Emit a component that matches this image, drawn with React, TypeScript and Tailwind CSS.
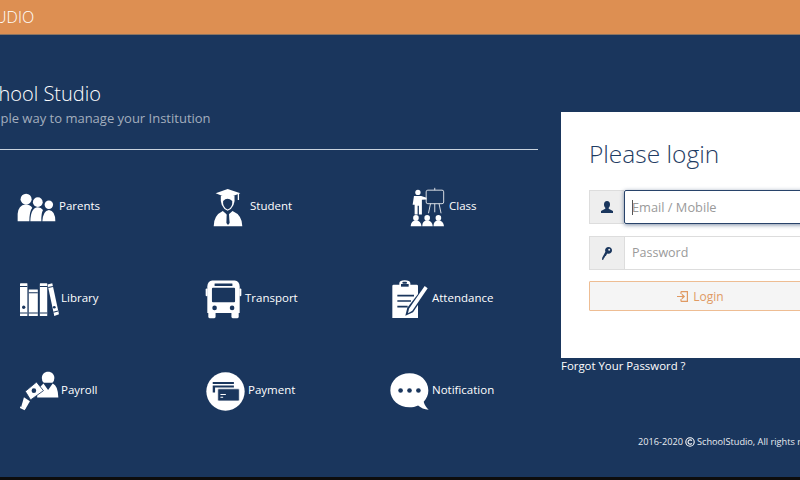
const DARK = "#1a365d";

function Parents() {
  return (
    <svg width="39" height="30" viewBox="50 65 120 92" fill="#fff">
      <circle cx="78" cy="87" r="17" />
      <circle cx="114" cy="96" r="15" />
      <circle cx="148" cy="104" r="13" />
      <path d="M52 155V132Q54 105 76 103Q90 103 97 113Q88 124 88 155Z" />
      <path d="M91 155Q92 114 114 112Q124 113 130 120Q124 130 125 155Z" />
      <path d="M128 155Q130 122 148 120Q168 122 168 155Z" />
    </svg>
  );
}

function Student() {
  return (
    <svg width="30" height="39" viewBox="638 52 92 120" fill="#fff">
      <path d="M662 76Q658 112 683 122Q708 112 704 76Z" />
      <path d="M669 92Q682 78 697 92Q699 112 683 118Q667 112 669 92Z" fill={DARK} />
      <path d="M683 55L722 68L683 83L646 68Z" />
      <rect x="714" y="70" width="4" height="19" />
      <path d="M640 170Q640 136 668 123L683 136L698 123Q728 136 728 170Z" />
      <path d="M680 132H687L689 160L684 166L679 160Z" fill={DARK} />
    </svg>
  );
}

function ClassIcon() {
  return (
    <svg width="35" height="40" viewBox="418 52 106 120" fill="#fff">
      <circle cx="442" cy="68" r="8" />
      <path d="M430 79H452L468 84V89L454 90V135H445V108H441V135H432V105H426Z" />
      <rect x="467" y="61" width="53" height="41" rx="5" fill="none" stroke="#fff" strokeWidth="2.500" />
      <path d="M493 54V61M480 102L474 131M493 102V128M506 102L512 131" stroke="#fff" strokeWidth="2.500" fill="none" />
      <circle cx="436" cy="145" r="8.500" />
      <circle cx="470" cy="145" r="8.500" />
      <circle cx="504" cy="145" r="8.500" />
      <path d="M420 170Q421 153 436 152Q451 153 453 170Z" />
      <path d="M455 170Q455 153 470 152Q485 153 487 170Z" />
      <path d="M489 170Q489 153 504 152Q519 153 521 170Z" />
    </svg>
  );
}

function Library() {
  return (
    <svg width="41" height="35" viewBox="55 336 122 104">
      <g fill="#fff">
        <rect x="58" y="340" width="22" height="97" rx="1" />
        <rect x="84" y="358" width="27" height="79" rx="1" />
        <rect x="117" y="340" width="22" height="97" rx="1" />
        <path d="M140 343L154 340L174 432L160 437Z" />
      </g>
      <g stroke={DARK} strokeWidth="3" fill="none">
        <path d="M58 349H80M58 428H80M84 368H111M84 428H111M117 349H139M117 428H139M142 352L156 349M157 426L171 422" />
      </g>
      <circle cx="69" cy="411" r="5" fill={DARK} />
      <circle cx="160" cy="411" r="4" fill={DARK} />
    </svg>
  );
}

function Bus() {
  return (
    <svg width="37" height="40" viewBox="612 328 112 120">
      <g fill="#fff">
        <path d="M634 332H702Q716 334 717 350V430H619V350Q620 334 634 332Z" />
        <rect x="614" y="356" width="6" height="24" rx="3" />
        <rect x="716" y="356" width="6" height="24" rx="3" />
        <rect x="622" y="425" width="22" height="21" rx="4" />
        <rect x="692" y="425" width="22" height="21" rx="4" />
      </g>
      <rect x="633" y="354" width="70" height="44" rx="3" fill={DARK} />
      <rect x="641" y="341" width="54" height="8" rx="1" fill={DARK} />
      <circle cx="641" cy="415" r="7" fill={DARK} />
      <circle cx="694" cy="415" r="7" fill={DARK} />
    </svg>
  );
}

function Attendance() {
  return (
    <svg width="38" height="40" viewBox="362 328 114 120">
      <path d="M366 349Q366 345 370 345H387V340Q388 332 403 332Q419 332 420 340V345H439Q443 345 443 349V445H366Z" fill="#fff" />
      <rect x="392" y="343" width="23" height="8" fill={DARK} />
      <rect x="396" y="336" width="14" height="6" rx="3" fill={DARK} />
      <path d="M381 378H431M381 394H422M381 411H412" stroke={DARK} strokeWidth="5" fill="none" />
      <path d="M466 344L478 354L428 428L405 438L411 414Z" fill={DARK} />
      <path d="M463 349L472 356L426 423L413 431L416 417Z" fill="#fff" />
    </svg>
  );
}

function Payroll() {
  return (
    <svg width="39" height="40" viewBox="60 35 118 120" fill="#fff">
      <path d="M145 37C156 37 164 45 164 56Q164 66 158 70H132Q126 66 126 56C126 45 134 37 145 37Z" />
      <path d="M131 72L145 92L159 72Q175 78 176 115H112V92Z" />
      <path d="M76 96L110 68L131 94L92 122Z" stroke={DARK} strokeWidth="2.500" />
      <circle cx="102" cy="94" r="7" fill={DARK} />
      <path d="M72 114L90 126L76 150L64 142Z" />
      <rect x="60" y="144" width="16" height="6" transform="rotate(25 68 147)" />
    </svg>
  );
}

function Payment() {
  return (
    <svg width="39" height="39" viewBox="617 36 116 116">
      <circle cx="675" cy="94" r="57" fill="#fff" />
      <path d="M637 66H700V72H637ZM637 76H700V82H637ZM637 82H644V97H637Z" fill={DARK} />
      <rect x="652" y="86" width="64" height="36" rx="3" fill={DARK} stroke="#fff" strokeWidth="2" />
      <path d="M660 103H676M660 111H668" stroke="#fff" strokeWidth="3" />
    </svg>
  );
}

function Notification() {
  return (
    <svg width="39" height="37" viewBox="360 38 118 112">
      <path d="M419 39C451 39 476 61 476 91C476 104 471 116 462 125C464 134 470 143 477 149C464 148 453 143 445 136C437 140 428 142 419 142C387 142 361 119 361 91C361 61 387 39 419 39Z" fill="#fff" />
      <circle cx="392" cy="91" r="7" fill={DARK} />
      <circle cx="419" cy="91" r="7" fill={DARK} />
      <circle cx="446" cy="91" r="7" fill={DARK} />
    </svg>
  );
}

const items = [
  { label: "Parents", Icon: Parents, cell: "pl-0 gap-[3px]" },
  { label: "Student", Icon: Student, cell: "pl-[10px] gap-[7px]" },
  { label: "Class", Icon: ClassIcon, cell: "pl-[21px] gap-[4px]" },
  { label: "Library", Icon: Library, cell: "pl-[2px] gap-[1px]" },
  { label: "Transport", Icon: Bus, cell: "pl-[2px] gap-[3px]" },
  { label: "Attendance", Icon: Attendance, cell: "pl-[2px] gap-[3px]" },
  { label: "Payroll", Icon: Payroll, cell: "pl-[3px] gap-[2px]" },
  { label: "Payment", Icon: Payment, cell: "pl-[3px] gap-[3px]" },
  { label: "Notification", Icon: Notification, cell: "pl-[1px] gap-[3px]" },
];

export default function App() {
  return (
    <div className="w-[800px] h-[480px] overflow-hidden flex flex-col bg-[#1a365d] font-['Open_Sans',sans-serif] text-white">
      <header className="h-[35px] shrink-0 bg-[#dd8f52] border-b border-[#8a7462] flex items-center">
        <span className="-ml-[89px] text-[16px] font-light leading-none whitespace-nowrap">SCHOOL STUDIO</span>
      </header>

      <main className="flex-1 flex min-h-0">
        <section className="w-[538px] shrink-0 pt-[47px]">
          <div className="-ml-[22px] whitespace-nowrap">
            <h1 className="text-[20px] font-light leading-[24px]">School Studio</h1>
            <p className="mt-[1px] text-[13px] leading-[22px] text-[#a3aebd]">Simple way to manage your Institution</p>
          </div>
          <hr className="mt-[20px] border-0 h-px bg-[#c9d3de]" />
          <div className="mt-[11px] pl-[17px] grid grid-cols-[186px_186px_186px] auto-rows-[92px]">
            {items.map(({ label, Icon, cell }) => (
              <div key={label} className={`flex items-center ${cell}`}>
                <Icon />
                <span className="mb-[2px] text-[11.500px] leading-none">{label}</span>
              </div>
            ))}
          </div>
        </section>

        <section className="ml-[23px] shrink-0 w-[279px] pt-[77px]">
          <div className="h-[246px] bg-white px-[28px] pt-[24px]">
            <h2 className="text-[24.500px] font-light leading-[36px] whitespace-nowrap text-[#1f3c63]">Please login</h2>
            <div className="mt-[18px] flex h-[34px]">
              <div className="w-[35px] shrink-0 flex items-center justify-center bg-[#eeeeee] border border-r-0 border-[#dddddd]">
                <svg width="12" height="12" viewBox="0 0 12 12" fill={DARK}>
                  <path d="M6 0C8 0 9 1.500 9 3.500C9 5 8.400 6 7.700 6.800V7.800L12 10V12H0V10L4.300 7.800V6.800C3.600 6 3 5 3 3.500C3 1.500 4 0 6 0Z" />
                </svg>
              </div>
              <div className="flex-1 flex items-center pl-[7px] pt-[1px] border border-[#28436a] rounded-[2px] shadow-[0_1px_4px_rgba(40,67,106,0.6)] text-[12.800px] text-[#9a9a9a]">
                <span className="w-px h-[15px] bg-[#555] mr-[-1px]" />
                <span>Email / Mobile</span>
              </div>
            </div>
            <div className="mt-[12px] flex h-[34px]">
              <div className="w-[35px] shrink-0 flex items-center justify-center bg-[#eeeeee] border border-r-0 border-[#dddddd]">
                <svg width="10" height="13" viewBox="0 0 10 13" fill={DARK}>
                  <path d="M6.500 0C8.500 0 10 1.500 10 3.300C10 5.300 8.500 6.800 6.500 6.800C6 6.800 5.600 6.700 5.200 6.500L3.800 9L3 9.300L2.800 10.500L1.900 10.800L1.700 12.200L0.400 13L0 12.800L0.200 10.800L3.400 4.700C3.200 4.300 3.100 3.800 3.100 3.300C3.100 1.500 4.500 0 6.500 0Z" />
                  <circle cx="7.200" cy="2.800" r="1" fill="#eeeeee" />
                </svg>
              </div>
              <div className="flex-1 flex items-center pl-[7px] border border-[#dddddd] text-[12.500px] text-[#9a9a9a]">Password</div>
            </div>
            <button className="mt-[11px] w-full h-[30px] pt-[1px] flex items-center justify-center gap-[5px] bg-[#f5f5f5] border border-[#eebd93] rounded-[1px] text-[12px] text-[#e09a63]">
              <svg width="11" height="11" viewBox="0 0 11 11" fill="none" stroke="#e09a63" strokeWidth="1.200">
                <path d="M4 .6H10.400V10.400H4M4 .6V3M4 10.400V8M0 5.500H7M4.800 3.200L7.200 5.500L4.800 7.800" />
              </svg>
              Login
            </button>
          </div>
          <p className="text-[11.400px] leading-[16px] whitespace-nowrap text-white">Forgot Your Password ?</p>
          <p className="mt-[61px] ml-[77px] flex items-center gap-[2px] text-[9.200px] leading-[14px] whitespace-nowrap text-[#e8ecf1]">
            2016-2020
            <svg width="10" height="10" viewBox="0 0 10 10" fill="none" stroke="#fff" strokeWidth="1.100" className="shrink-0">
              <circle cx="5" cy="5" r="4.200" />
              <path d="M6.800 3.700A2.100 2.100 0 1 0 6.800 6.300" />
            </svg>
            SchoolStudio, All rights reserved
          </p>
        </section>
      </main>
      <div className="h-[3px] shrink-0 bg-[#0d0d0d]" />
    </div>
  );
}
